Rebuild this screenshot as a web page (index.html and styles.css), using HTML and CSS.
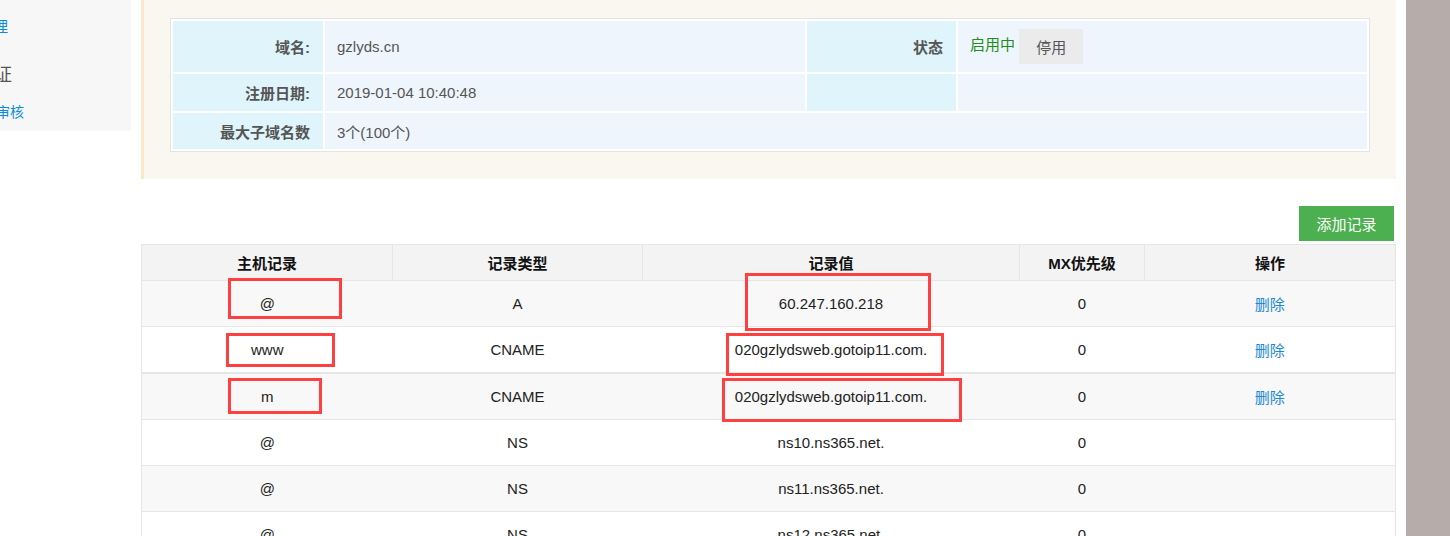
FILE: index.html
```html
<!DOCTYPE html>
<html lang="zh-CN">
  <head>
    <meta charset="UTF-8" />
    <title>域名解析</title>
    <link rel="stylesheet" href="styles.css">
  </head>
  <body>
    <div class="page">
      <div class="sidebar">
        <a class="nav-link">域名管理</a>
        <div class="nav-title">实名认证</div>
        <a class="nav-sub">资料审核</a>
      </div>

      <div class="content">
        <div class="domain-panel">
          <table class="info-table">
            <tr class="row-tall">
              <td class="label label-wide">域名:</td>
              <td class="value value-wide">gzlyds.cn</td>
              <td class="label label-narrow">状态</td>
              <td class="value value-narrow">
                <span class="status-on">启用中</span>
                <button class="btn-stop">停用</button>
              </td>
            </tr>
            <tr>
              <td class="label">注册日期:</td>
              <td class="value">2019-01-04 10:40:48</td>
              <td class="label"></td>
              <td class="value"></td>
            </tr>
            <tr>
              <td class="label">最大子域名数</td>
              <td class="value" colspan="3">3个(100个)</td>
            </tr>
          </table>
        </div>

        <div class="toolbar">
          <button class="btn-add">添加记录</button>
        </div>

        <div class="records">
          <table class="record-table">
            <colgroup>
              <col class="col-host">
              <col class="col-type">
              <col class="col-value">
              <col class="col-mx">
              <col class="col-op">
            </colgroup>
            <thead>
              <tr>
                <th>主机记录</th>
                <th>记录类型</th>
                <th>记录值</th>
                <th>MX优先级</th>
                <th>操作</th>
              </tr>
            </thead>
            <tbody>
              <tr>
                <td>@</td>
                <td>A</td>
                <td>60.247.160.218</td>
                <td>0</td>
                <td><a class="del">删除</a></td>
              </tr>
              <tr>
                <td>www</td>
                <td>CNAME</td>
                <td>020gzlydsweb.gotoip11.com.</td>
                <td>0</td>
                <td><a class="del">删除</a></td>
              </tr>
              <tr class="row-split">
                <td>m</td>
                <td>CNAME</td>
                <td>020gzlydsweb.gotoip11.com.</td>
                <td>0</td>
                <td><a class="del">删除</a></td>
              </tr>
              <tr>
                <td>@</td>
                <td>NS</td>
                <td>ns10.ns365.net.</td>
                <td>0</td>
                <td></td>
              </tr>
              <tr>
                <td>@</td>
                <td>NS</td>
                <td>ns11.ns365.net.</td>
                <td>0</td>
                <td></td>
              </tr>
              <tr>
                <td>@</td>
                <td>NS</td>
                <td>ns12.ns365.net.</td>
                <td>0</td>
                <td></td>
              </tr>
            </tbody>
          </table>

          <!-- red annotation boxes drawn over the screenshot -->
          <div class="mark mark-1"></div>
          <div class="mark mark-2"></div>
          <div class="mark mark-3"></div>
          <div class="mark mark-4"></div>
          <div class="mark mark-5"></div>
          <div class="mark mark-6"></div>
        </div>
      </div>

      <div class="scroll-strip"></div>
    </div>
  </body>
</html>
```

FILE: styles.css
```css
body {
  margin: 0;
  font-family: "Liberation Sans", "Noto Sans CJK SC", sans-serif;
  font-size: 15px;
  color: #333;
  background: #fff;
}
.page {
  display: flex;
  align-items: flex-start;
  height: 536px;
  overflow: hidden;
}
.sidebar {
  width: 131px;
  height: 131px;
  flex-shrink: 0;
  background: #f7f7f7;
  overflow: hidden;
}
.nav-link,
.nav-sub,
.nav-title {
  display: block;
  white-space: nowrap;
}
.nav-link {
  margin: 17px 0 0 -52px;
  color: #0a8cd6;
  font-size: 15px;
  line-height: 20px;
}
.nav-title {
  margin: 27px 0 0 -60px;
  color: #555;
  font-size: 18px;
  line-height: 22px;
}
.nav-sub {
  margin: 17px 0 0 -32px;
  color: #0a8cd6;
  font-size: 14px;
  line-height: 18px;
}
.content {
  width: 1255px;
  margin-left: 10px;
  flex-shrink: 0;
}
.domain-panel {
  height: 179px;
  box-sizing: border-box;
  padding: 18px 25px 0 26px;
  background: #faf7f0;
  border-left: 3px solid #f9e8c9;
}
.info-table {
  width: 1200px;
  border: 1px solid #e4e4e4;
  border-spacing: 2px;
  background: #fff;
  color: #555;
}
.info-table td {
  height: 37px;
  padding: 0 12px;
  box-sizing: border-box;
}
.info-table .row-tall td {
  height: 51px;
}
.info-table tr:last-child td {
  height: 36px;
}
.info-table .label {
  background: #dff4fb;
  text-align: right;
  font-weight: bold;
  padding-right: 13px;
}
.info-table .value {
  background: #eff5fc;
}
.label-wide {
  width: 150px;
}
.value-wide {
  width: 480px;
}
.label-narrow {
  width: 149px;
}
.value-narrow {
  width: 409px;
}
.status-on {
  color: #1a8f1a;
}
.btn-stop {
  height: 35px;
  padding: 0 17px;
  border: none;
  background: #ebebeb;
  color: #555;
  font-family: inherit;
  font-size: 15px;
  vertical-align: middle;
}
.toolbar {
  display: flex;
  justify-content: flex-end;
  margin: 27px 2px 3px 0;
}
.btn-add {
  width: 95px;
  height: 35px;
  border: none;
  background: #4caf50;
  color: #fff;
  font-family: inherit;
  font-size: 15px;
}
.records {
  position: relative;
}
.record-table {
  width: 1254px;
  border-collapse: collapse;
  border: 1px solid #e6e6e6;
  table-layout: fixed;
}
.col-host {
  width: 251px;
}
.col-type {
  width: 250px;
}
.col-value {
  width: 377px;
}
.col-mx {
  width: 125px;
}
.col-op {
  width: 251px;
}
.record-table th {
  height: 35px;
  padding: 0;
  background: #f3f3f3;
  border: 1px solid #e6e6e6;
  color: #111;
  font-weight: bold;
}
.record-table td {
  height: 45px;
  padding: 0;
  text-align: center;
  border-top: 1px solid #e6e6e6;
  color: #222;
}
.record-table tbody tr:nth-child(odd) {
  background: #f8f8f8;
}
.record-table .row-split td {
  border-top: 2px solid #e6e6e6;
}
.del {
  color: #1b89d4;
}
.mark {
  position: absolute;
  box-sizing: border-box;
  border: 3px solid #ff4040;
}
.mark-1 {
  left: 87px;
  top: 34px;
  width: 114px;
  height: 41px;
}
.mark-2 {
  left: 85px;
  top: 89px;
  width: 109px;
  height: 34px;
}
.mark-3 {
  left: 87px;
  top: 134px;
  width: 94px;
  height: 36px;
}
.mark-4 {
  left: 604px;
  top: 29px;
  width: 186px;
  height: 58px;
}
.mark-5 {
  left: 585px;
  top: 89px;
  width: 218px;
  height: 43px;
}
.mark-6 {
  left: 581px;
  top: 134px;
  width: 240px;
  height: 44px;
}
.scroll-strip {
  width: 44px;
  height: 536px;
  margin-left: 10px;
  flex-shrink: 0;
  background: #b6adab;
}
```
